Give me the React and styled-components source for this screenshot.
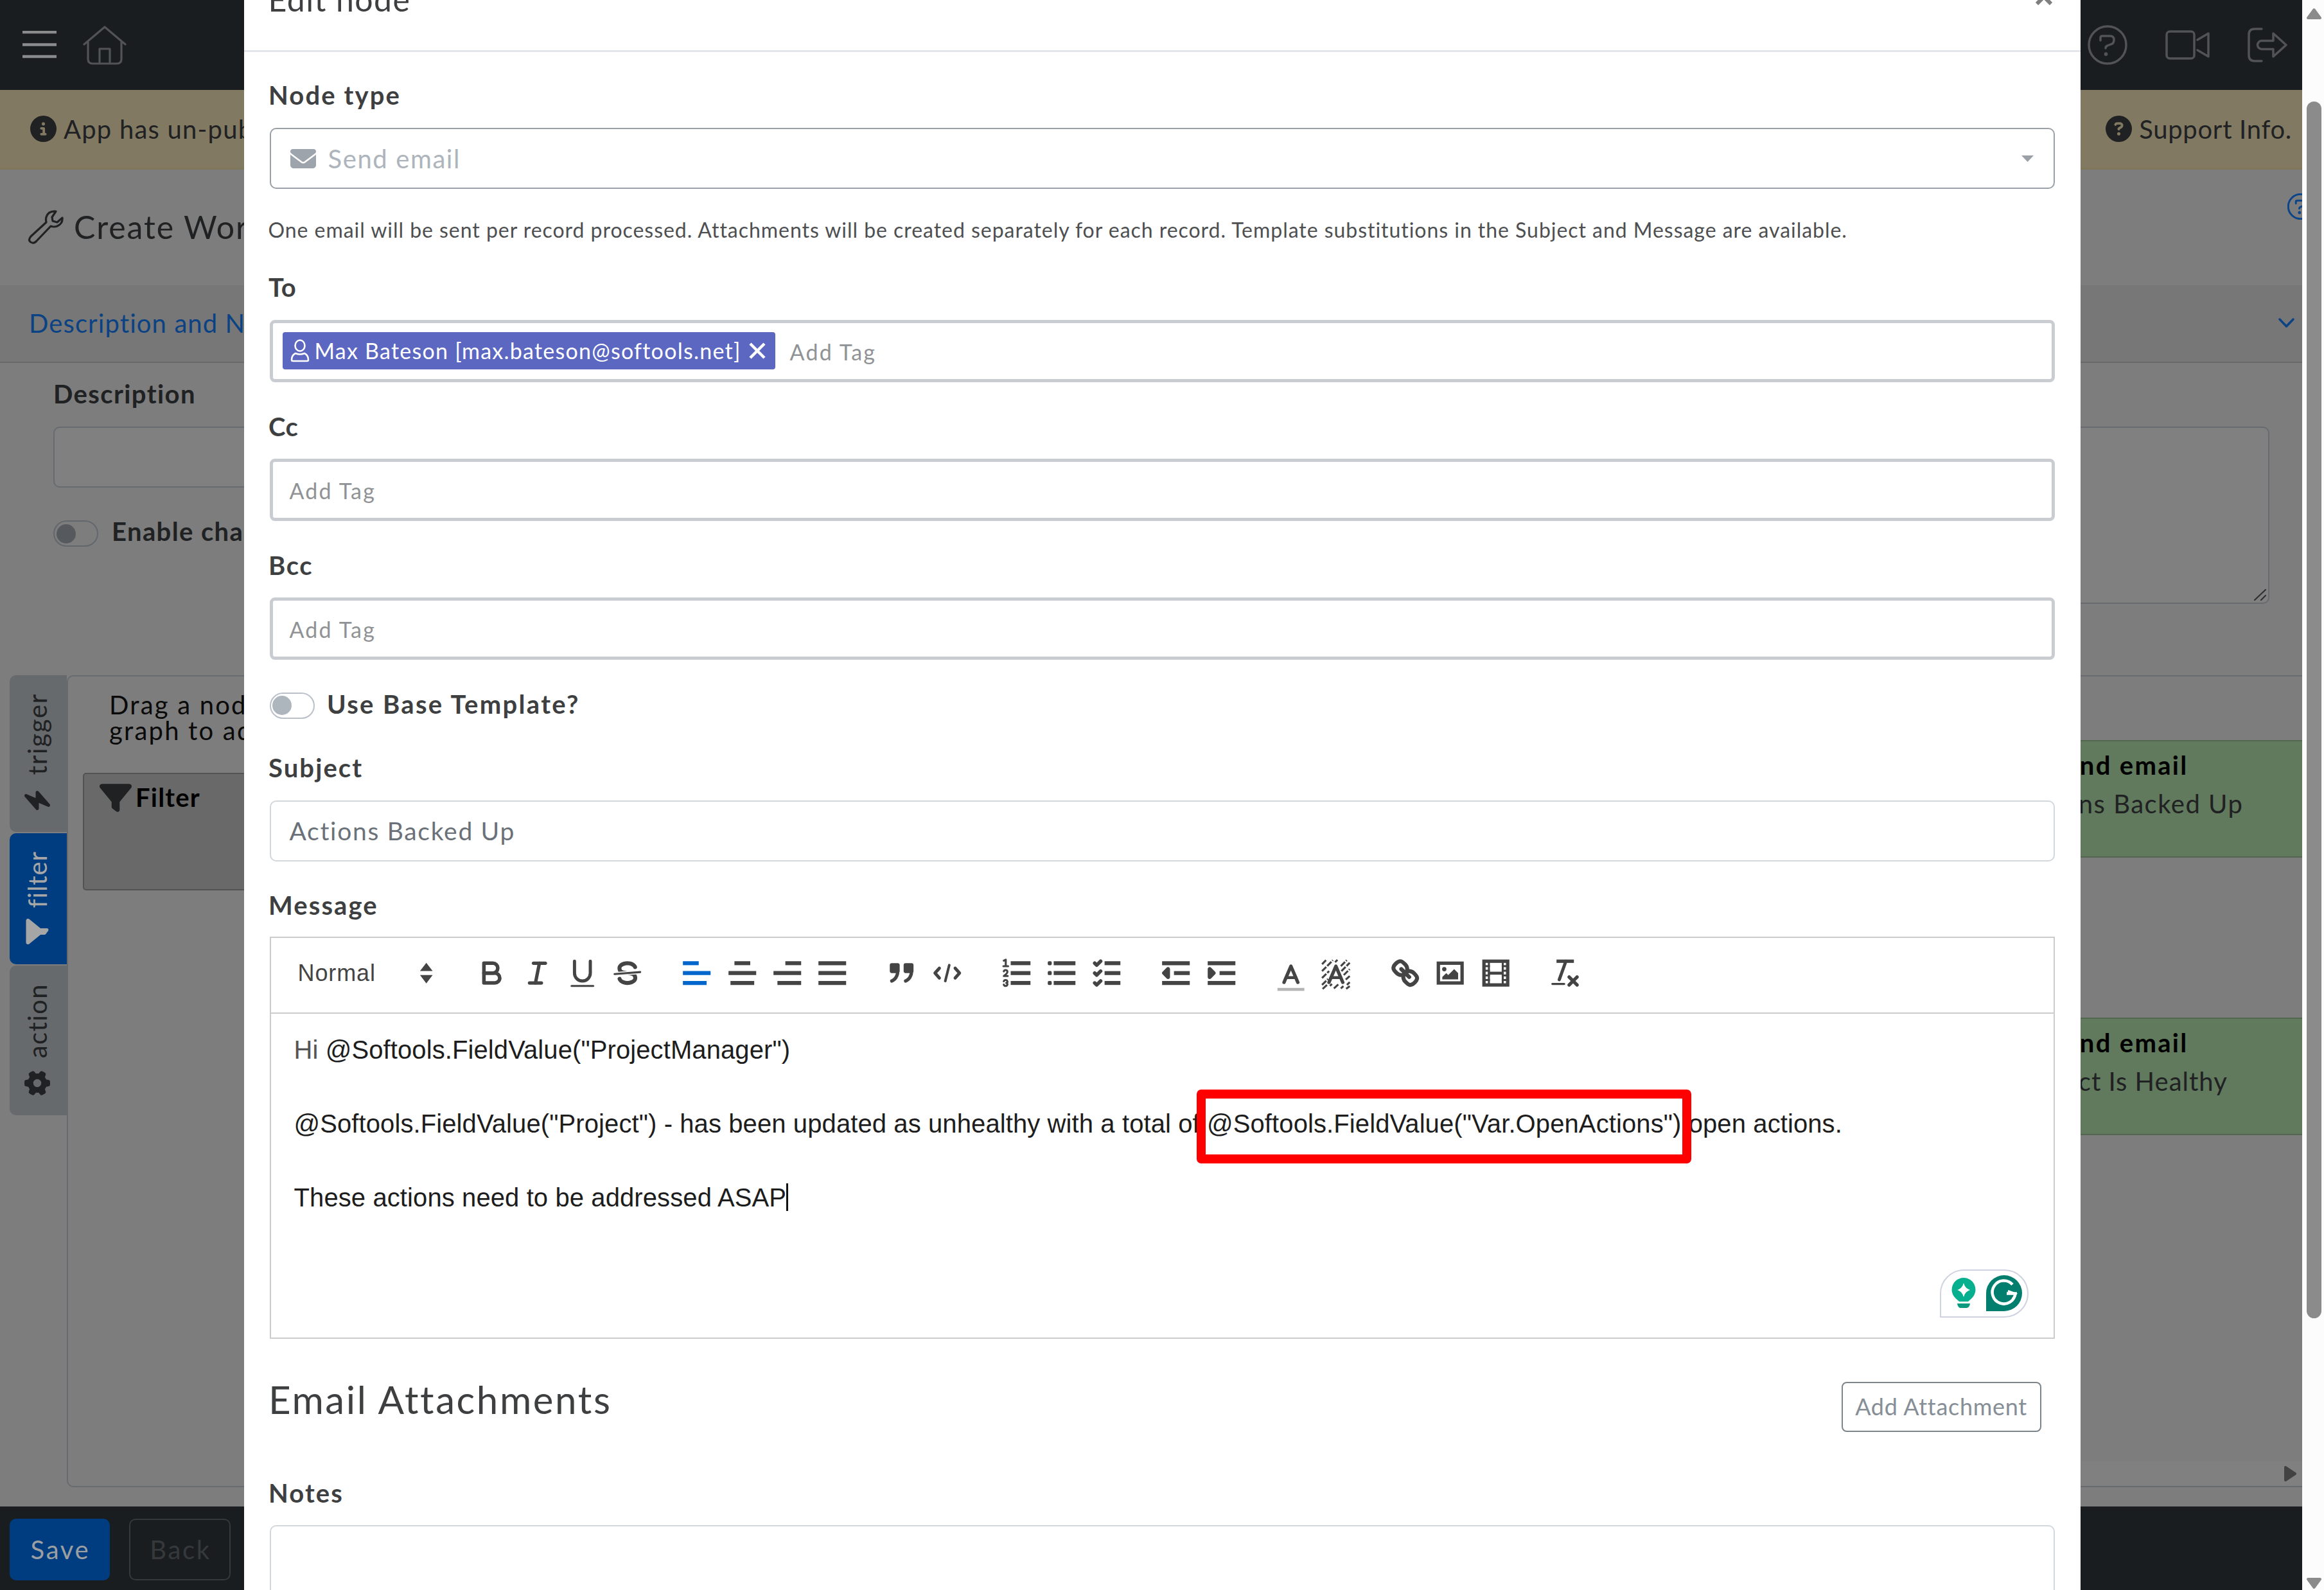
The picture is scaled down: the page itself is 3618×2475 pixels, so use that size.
import React from 'react';
import styled, { createGlobalStyle } from 'styled-components';
import { FaBolt, FaFilter, FaGear, FaCircleInfo, FaCircleQuestion, FaEnvelope } from 'react-icons/fa6';

const GlobalStyle = createGlobalStyle`
  *, *::before, *::after { box-sizing: border-box; }
  body { margin: 0; background: #7d7d7d; }
`;

/* ---------- page shell ---------- */

const Shell = styled.div`
  position: relative;
  display: flex;
  width: 3618px;
  height: 2475px;
  overflow: hidden;
  font-family: Lato, 'Open Sans', sans-serif;
  font-size: 40px;
  line-height: 60px;
  letter-spacing: 1.9px;
  color: #202122;
  white-space: nowrap;
`;

const Page = styled.div`
  display: flex;
  flex-direction: column;
  width: 3584px;
  overflow: hidden;
  background: #7d7d7d;
`;

const TopBar = styled.header`
  display: flex;
  align-items: center;
  justify-content: space-between;
  height: 140px;
  padding: 0 23px 0 35px;
  background: #1a1d20;
  color: #515355;
`;

const IconRow = styled.div`
  display: flex;
  align-items: center;
  gap: ${(p) => p.$gap}px;
`;

const Banner = styled.div`
  display: flex;
  align-items: center;
  justify-content: space-between;
  height: 124px;
  padding: 0 16px 0 47px;
  background: #827963;
  border-bottom: 3px solid #80765a;
`;

const BannerItem = styled.div`
  display: flex;
  align-items: center;
  gap: 11px;
  letter-spacing: ${(p) => p.$ls}px;
  svg { font-size: 41px; }
`;

const TitleBar = styled.div`
  display: flex;
  justify-content: space-between;
  height: 180px;
  padding-left: 42px;
`;

const PageTitle = styled.h1`
  display: flex;
  align-items: center;
  gap: 15px;
  margin: 0;
  height: 178px;
  font-size: 50px;
  font-weight: 400;
`;

const HelpCorner = styled.div`
  width: 23px;
  padding-top: 37px;
  overflow: hidden;
  color: #0b4488;
  svg { display: block; }
`;

const AccordionHeader = styled.div`
  display: flex;
  align-items: center;
  justify-content: space-between;
  height: 121px;
  padding: 0 12px 1px 45px;
  background: #777777;
  border-bottom: 2.5px solid #696969;
  color: #0b4284;
  letter-spacing: 1.1px;
`;

const FormArea = styled.section`
  display: flex;
  justify-content: space-between;
  height: 486px;
  padding: 18px 51px 0 83px;
`;

const FormColumn = styled.div`
  display: flex;
  flex-direction: column;
  width: 1650px;
`;

const DimLabel = styled.span`
  font-weight: 700;
  letter-spacing: 1.4px;
`;

const DimInput = styled.div`
  height: 95px;
  margin-top: 21px;
  border: 2.5px solid #676b6f;
  border-radius: 10px;
  background: #808080;
`;

const DimTextarea = styled.div`
  display: flex;
  align-items: flex-end;
  justify-content: flex-end;
  width: 1720px;
  height: 276px;
  margin-top: 81px;
  padding: 3px;
  border: 2.5px solid #676b6f;
  border-radius: 10px;
  background: #808080;
  color: #303030;
`;

const ToggleRow = styled.div`
  display: flex;
  align-items: center;
  height: 60px;
  margin-top: ${(p) => p.$mt}px;
  gap: 21px;
`;

const Switch = styled.span`
  display: flex;
  align-items: center;
  width: 70px;
  height: 41px;
  margin-top: 7px;
  padding-left: 2.5px;
  border: 2.5px solid ${(p) => p.$line};
  border-radius: 21px;
  &::before {
    content: '';
    width: 30px;
    height: 30px;
    border-radius: 50%;
    background: ${(p) => p.$knob};
  }
`;

const Workspace = styled.section`
  display: flex;
  height: 1264px;
  padding-left: 15px;
`;

const Tabs = styled.nav`
  display: flex;
  flex-direction: column;
  gap: 2px;
  width: 89px;
`;

const Tab = styled.div`
  display: flex;
  flex-direction: column;
  align-items: center;
  justify-content: space-between;
  height: ${(p) => p.$h}px;
  padding: 28px 4px ${(p) => p.$pb}px 0;
  border-radius: 10px 0 0 10px;
  background: ${(p) => (p.$active ? '#003d80' : '#666a6d')};
  color: ${(p) => (p.$active ? '#a6a6a6' : '#202122')};
  svg { transform: rotate(-90deg); font-size: 40px; }
`;

const TabText = styled.span`
  writing-mode: vertical-rl;
  transform: rotate(180deg);
  letter-spacing: ${(p) => p.$ls}px;
`;

const WorkPanel = styled.div`
  position: relative;
  flex: 1;
  display: flex;
  border: 2.5px solid #676a6e;
  border-right: 0;
  border-radius: 10px 0 0 10px;
`;

const Palette = styled.div`
  display: flex;
  flex-direction: column;
  width: 500px;
  padding: 24px 0 0 23px;
`;

const Hint = styled.p`
  margin: 0 0 0 41px;
  line-height: 40px;
  color: #0a0a0a;
  letter-spacing: 2.2px;
`;

const PaletteNode = styled.div`
  display: flex;
  align-items: flex-start;
  gap: 6px;
  width: 450px;
  height: 183px;
  margin-top: 46px;
  padding: 6px 24px;
  border: 2.5px solid #535353;
  border-radius: 5px;
  background: #696969;
  color: #000;
  font-weight: 700;
  letter-spacing: 1.2px;
  svg { font-size: 50px; margin-top: 6px; color: #202122; }
`;

const GraphNode = styled.div`
  position: absolute;
  top: ${(p) => p.$top}px;
  left: 3024px;
  display: flex;
  flex-direction: column;
  width: 600px;
  height: 183px;
  padding: 7px 10px;
  border: 2.5px solid #536650;
  background: #61795d;
`;

const NodeTitle = styled.div`
  display: flex;
  align-items: center;
  padding-left: 48px;
  color: #000;
  font-weight: 700;
  letter-spacing: 2.3px;
`;

const NodeText = styled.div`
  margin-left: ${(p) => p.$ml}px;
  letter-spacing: ${(p) => p.$ls}px;
`;

const CanvasScroll = styled.div`
  position: absolute;
  left: 500px;
  right: 0;
  bottom: 0;
  display: flex;
  align-items: center;
  justify-content: flex-end;
  height: 38px;
  padding-right: 9px;
  background: #808080;
  color: #424242;
`;

const Footer = styled.footer`
  display: flex;
  gap: 30px;
  height: 130px;
  margin-top: auto;
  padding: 19px 15px;
  background: #1a1d20;
`;

const FooterButton = styled.button`
  width: ${(p) => p.$w}px;
  height: 96px;
  padding: 0;
  border: 2.5px solid ${(p) => (p.$primary ? '#003d80' : '#36393c')};
  border-radius: 10px;
  background: ${(p) => (p.$primary ? '#003d80' : 'transparent')};
  color: ${(p) => (p.$primary ? '#9c9fa2' : '#36393c')};
  font: inherit;
  letter-spacing: 2.7px;
  text-indent: 2px;
`;

/* ---------- window scrollbar ---------- */

const Scrollbar = styled.div`
  display: flex;
  flex-direction: column;
  align-items: center;
  width: 34px;
  padding: 12px 4px 1px 7px;
  background: #fcfcfc;
  color: #8b8b8b;
`;

const ScrollThumb = styled.div`
  width: 23px;
  height: 1894px;
  margin: 128px 0 auto;
  border-radius: 12px;
  background: #8b8b8b;
`;

/* ---------- dialog ---------- */

const Dialog = styled.div`
  position: absolute;
  top: 0;
  left: 379.5px;
  width: 2859px;
  height: 2475px;
  overflow: hidden;
  background: #fff;
  color: #3e3f40;
`;

const DialogHeader = styled.div`
  display: flex;
  justify-content: space-between;
  height: 81px;
  padding: 0 44px 0 38px;
  border-bottom: 3px solid #e2e5ec;
  svg { margin-top: -18px; }
`;

const DialogTitle = styled.h5`
  margin: -31px 0 0;
  font-size: 50px;
  font-weight: 400;
  letter-spacing: 1.4px;
`;

const DialogBody = styled.div`
  display: flex;
  flex-direction: column;
  padding: 0 40px;
`;

const Field = styled.div`
  display: flex;
  flex-direction: column;
  gap: ${(p) => p.$gap || 21.5}px;
  margin-top: ${(p) => p.$mt}px;
`;

const Label = styled.label`
  height: 60px;
  margin-left: -1.5px;
  line-height: 63px;
  font-weight: 700;
  letter-spacing: ${(p) => p.$ls || 2.1}px;
`;

const Select = styled.div`
  display: flex;
  align-items: center;
  height: 95px;
  margin-top: 1px;
  padding: 0 31px 0 30px;
  border: 2.5px solid #9aa0a8;
  border-radius: 10px;
  color: #adb4bb;
  svg:first-child { font-size: 40px; color: #9ea4ab; margin-right: 19px; }
`;

const SelectValue = styled.span`
  flex: 1;
  letter-spacing: 1.6px;
`;

const HelpText = styled.p`
  height: 48px;
  margin: 38px 0 0 -2px;
  font-size: 32px;
  line-height: 52px;
  letter-spacing: 0.96px;
  color: #4d4f51;
`;

const TagInput = styled.div`
  display: flex;
  align-items: center;
  height: 97px;
  padding: 0 0 0 ${(p) => (p.$filled ? 15 : 26)}px;
  border: 5px solid #c9ccd0;
  border-radius: 8px;
  font-size: 34px;
`;

const Placeholder = styled.span`
  padding-top: 3px;
  color: #909395;
  letter-spacing: 2.2px;
`;

const Tag = styled.span`
  display: flex;
  align-items: center;
  height: 58px;
  margin-right: 23px;
  padding: 0 15px 0 12px;
  border-radius: 4px;
  background: #5b67c1;
  color: #fff;
  letter-spacing: 1.25px;
`;

const TagText = styled.span`
  margin: 0 12px 0 8px;
`;

const TextInput = styled.div`
  display: flex;
  align-items: center;
  height: ${(p) => p.$h}px;
  padding: 0 0 0 29px;
  border: 2.5px solid #d2d7dc;
  border-radius: 10px;
  color: #6a7178;
  font-size: 39px;
  letter-spacing: 1.7px;
`;

/* ---------- rich text editor ---------- */

const Editor = styled.div`
  position: relative;
  display: flex;
  flex-direction: column;
  height: 625.5px;
  border: 2.5px solid #ccc;
  font-family: 'Liberation Sans', Arial, sans-serif;
`;

const Toolbar = styled.div`
  display: flex;
  align-items: center;
  gap: 37.7px;
  height: 118px;
  padding: 0 0 6px 42px;
  border-bottom: 2.5px solid #ccc;
  color: #444;
`;

const ToolGroup = styled.div`
  display: flex;
`;

const ToolButton = styled.span`
  display: flex;
  justify-content: center;
  width: 70.35px;
  color: ${(p) => (p.$active ? '#06c' : '#444')};
`;

const FormatPicker = styled.div`
  display: flex;
  align-items: center;
  width: 229.5px;
  font-size: 36px;
  letter-spacing: 0.9px;
  svg { margin-left: 51px; }
`;

const MessageBody = styled.div`
  padding: 28px 0 0 36px;
  color: #1d1d1d;
  letter-spacing: 0.1px;
`;

const Line = styled.p`
  height: 57.4px;
  margin: 0;
  line-height: 57.4px;
`;

const Muted = styled.span`
  color: #555;
`;

const Highlight = styled.span`
  position: relative;
  &::after {
    content: '';
    position: absolute;
    top: -31px;
    left: -16px;
    width: 770px;
    height: 115px;
    border: 14px solid #fe0000;
    border-radius: 7px;
  }
`;

const Caret = styled.span`
  display: inline-block;
  width: 2.5px;
  height: 43px;
  background: #111;
  vertical-align: -7px;
`;

const Assistant = styled.div`
  position: absolute;
  right: 38.5px;
  bottom: 31px;
  display: flex;
  align-items: center;
  gap: 16px;
  width: 138px;
  height: 75px;
  padding-left: 16px;
  border: 2.5px solid #cfd2e0;
  border-radius: 38px 38px 38px 0;
  background: #fff;
`;

const AttachmentRow = styled.div`
  display: flex;
  align-items: flex-start;
  justify-content: space-between;
  height: 88px;
  margin-top: 58.5px;
  padding-right: 21px;
`;

const SectionTitle = styled.h2`
  margin: 0 0 0 -1.5px;
  font-size: 60px;
  line-height: 73px;
  font-weight: 400;
  letter-spacing: 2.6px;
`;

const OutlineButton = styled.button`
  width: 311px;
  height: 78px;
  margin-top: 9px;
  padding: 0 0 2px;
  border: 2.5px solid #7c848c;
  border-radius: 8px;
  background: #fff;
  color: #868e96;
  font: inherit;
  font-size: 36px;
  letter-spacing: 0.7px;
`;

/* ---------- icons ---------- */

const Outline = ({ w, h, box, sw, children }) => (
  <svg width={w} height={h} viewBox={box} fill="none" stroke="currentColor" strokeWidth={sw} strokeLinecap="round" strokeLinejoin="round">
    {children}
  </svg>
);

const HelpCircle = ({ size, sw }) => (
  <Outline w={size} h={size} box="0 0 62 62" sw={sw}>
    <circle cx="31" cy="31" r="29" />
    <path d="M20 24v-4q0-3 3-3h12q6 0 6 6t-5 7l-5 2q-3 1-3 4" />
    <path d="M28.500 45v.5" strokeWidth={sw * 1.6} />
  </Outline>
);

const Quill = ({ children }) => (
  <svg width="55.400" height="55.400" viewBox="0 0 18 18" fill="none" stroke="currentColor" strokeWidth="2" strokeLinecap="round" strokeLinejoin="round">
    {children}
  </svg>
);

const Fill = styled.g`
  fill: currentColor;
  stroke: none;
`;

const Bars = ({ rows }) => rows.map(([a, b, y]) => <line key={y} x1={a} x2={b} y1={y} y2={y} strokeLinecap="butt" />);

const icons = {
  bold: (
    <>
      <path d="M5,4H9.500A2.500,2.500,0,0,1,12,6.500v0A2.500,2.500,0,0,1,9.500,9H5Z" strokeWidth="1.800" />
      <path d="M5,9h5.500A2.500,2.500,0,0,1,13,11.500v0A2.500,2.500,0,0,1,10.500,14H5Z" strokeWidth="1.800" />
    </>
  ),
  italic: (
    <g strokeWidth="1.700">
      <line x1="7" x2="13" y1="4" y2="4" />
      <line x1="5" x2="11" y1="14" y2="14" />
      <line x1="8" x2="10" y1="14" y2="4" />
    </g>
  ),
  underline: (
    <>
      <path d="M5,3V9a4.012,4.012,0,0,0,4,4H9a4.012,4.012,0,0,0,4-4V3" strokeWidth="1.600" />
      <rect x="3" y="15" width="12" height="1" rx=".5" fill="currentColor" stroke="none" />
    </>
  ),
  strike: (
    <>
      <line x1="15.500" x2="2.500" y1="8.500" y2="9.500" strokeWidth="1" />
      <Fill>
        <path d="M9.007,8C6.542,7.791,6,7.519,6,6.500,6,5.792,7.283,5,9,5c1.571,0,2.765.679,2.969,1.309a1,1,0,0,0,1.900-.617C13.356,4.106,11.354,3,9,3,6.200,3,4,4.538,4,6.500a3.200,3.200,0,0,0,.5,1.843Z" />
        <path d="M8.984,10C11.457,10.208,12,10.479,12,11.500c0,.708-1.283,1.500-3,1.500-1.571,0-2.765-.679-2.969-1.309a1,1,0,1,0-1.900.617C4.644,13.894,6.646,15,9,15c2.800,0,5-1.538,5-3.500a3.200,3.200,0,0,0-.5-1.843Z" />
      </Fill>
    </>
  ),
  left: <Bars rows={[[2, 10, 4], [2, 16, 9], [2, 14, 14]]} />,
  center: <Bars rows={[[5, 13, 4], [2, 16, 9], [3, 15, 14]]} />,
  right: <Bars rows={[[8, 16, 4], [2, 16, 9], [4, 16, 14]]} />,
  justify: <Bars rows={[[2, 16, 4], [2, 16, 9], [2, 16, 14]]} />,
  quote: (
    <g fill="currentColor">
      <rect x="4" y="5" width="3" height="3" />
      <rect x="11" y="5" width="3" height="3" />
      <path d="M7,8c0,4.031-3,5-3,5" strokeWidth="1.700" fill="none" />
      <path d="M14,8c0,4.031-3,5-3,5" strokeWidth="1.700" fill="none" />
    </g>
  ),
  code: (
    <g strokeWidth="1.600">
      <polyline points="5 6.500 2.800 9 5 11.500" />
      <polyline points="13 6.500 15.200 9 13 11.500" />
      <line x1="10" x2="8" y1="5" y2="13" strokeWidth="1.300" />
    </g>
  ),
  ordered: (
    <>
      <Bars rows={[[6, 16, 4], [6, 16, 9], [6, 16, 14]]} />
      <g strokeWidth="1">
        <path d="M2.500 2.700l1-.5V5.500M2.300 5.500h2.400" />
        <path d="M4.500,10.500h-2c0-.234,1.850-1.076,1.850-2.234A0.959,0.959,0,0,0,2.500,8.156" />
        <path d="M2.500,14.846a0.959,0.959,0,0,0,1.850-.109A0.700,0.700,0,0,0,3.750,14a0.688,0.688,0,0,0,.6-0.736,0.959,0.959,0,0,0-1.850-.109" />
      </g>
    </>
  ),
  bullet: (
    <>
      <Bars rows={[[5, 16, 4], [5, 16, 9], [5, 16, 14]]} />
      <Fill>
        <rect x="2" y="3" width="2" height="2" rx=".6" />
        <rect x="2" y="8" width="2" height="2" rx=".6" />
        <rect x="2" y="13" width="2" height="2" rx=".6" />
      </Fill>
    </>
  ),
  check: (
    <>
      <Bars rows={[[8, 16, 4], [8, 16, 9], [8, 16, 14]]} />
      <g strokeWidth="1.800">
        <polyline points="3 4 4 5 6 3" />
        <polyline points="3 9 4 10 6 8" />
        <polyline points="3 14 4 15 6 13" />
      </g>
    </>
  ),
  outdent: (
    <>
      <Bars rows={[[2, 16, 4], [8, 16, 9], [2, 16, 14]]} />
      <polygon points="5 7 5 11 3 9" fill="currentColor" />
    </>
  ),
  indent: (
    <>
      <Bars rows={[[2, 16, 4], [8, 16, 9], [2, 16, 14]]} />
      <polygon points="3 7 3 11 5 9" fill="currentColor" />
    </>
  ),
  color: (
    <g>
      <polyline points="5.500 13.700 9 5.500 12.500 13.700" strokeWidth="1.700" />
      <line x1="6.500" x2="11.500" y1="11.300" y2="11.300" strokeWidth="1.500" />
      <rect x="2.200" y="16.500" width="13.600" height="1.500" fill="#b4b4b4" stroke="none" />
    </g>
  ),
  background: (
    <g>
      <path
        d="M2 4.500L4 2.500M2 8L7.500 2.500M2 11.500L5.600 8M2 15L5 12M2.300 17L4.500 15M8.600 3.500L9.800 2.300M11.500 5.500L14.500 2.500M11.800 8L16 3.800M13 10L16 7M14 12.300L16 10.500M14.600 15L16 13.600M14.200 17L16 15.600M6 15.500L7 14.500M8 16.800L10.500 14.500M11.500 16.800L12.800 15.600"
        strokeWidth="1"
        strokeDasharray="3 .7"
        strokeLinecap="butt"
      />
      <polyline points="5.500 13.700 9 5.500 12.500 13.700" strokeWidth="1.700" />
      <line x1="6.500" x2="11.500" y1="11.300" y2="11.300" strokeWidth="1.500" />
    </g>
  ),
  link: (
    <>
      <line x1="7" x2="11" y1="7" y2="11" />
      <path d="M8.900,4.577a3.476,3.476,0,0,1,.36,4.679A3.476,3.476,0,0,1,4.577,8.900C3.185,7.500,2.035,6.400,4.217,4.217S7.500,3.185,8.900,4.577Z" />
      <path d="M13.423,9.100a3.476,3.476,0,0,0-4.679-.36,3.476,3.476,0,0,0,.36,4.679c1.392,1.392,2.500,2.542,4.679.36S14.815,10.500,13.423,9.100Z" />
    </>
  ),
  image: (
    <>
      <rect x="3" y="4" width="12" height="10" strokeWidth="1.700" strokeLinejoin="miter" />
      <Fill>
        <circle cx="6" cy="7" r="1.100" />
        <polygon points="5 12.200 5 11 7 9 8 10 11 7 13 9 13 12.200" />
      </Fill>
    </>
  ),
  video: (
    <>
      <rect x="3" y="3" width="12" height="12" strokeWidth="1.700" strokeLinejoin="miter" />
      <Fill>
        <rect x="5" y="3" width="1" height="12" />
        <rect x="12" y="3" width="1" height="12" />
        <rect x="5" y="8.300" width="8" height="1.500" />
        {[5, 7.3, 9.7, 12].map((y) => (
          <React.Fragment key={y}>
            <rect x="3" y={y} width="3" height="1" />
            <rect x="12" y={y} width="3" height="1" />
          </React.Fragment>
        ))}
      </Fill>
    </>
  ),
  clean: (
    <>
      <line x1="4.600" x2="13.400" y1="3" y2="3" strokeWidth="1.700" strokeLinecap="butt" />
      <line x1="6" x2="9.350" y1="12.300" y2="3" strokeWidth="1.600" />
      <line x1="11" x2="15" y1="11" y2="15" strokeWidth="1.700" />
      <line x1="15" x2="11" y1="11" y2="15" strokeWidth="1.700" />
      <rect x="2" y="14" width="7" height="1" rx=".5" fill="currentColor" stroke="none" />
    </>
  ),
};

const toolGroups = [
  ['bold', 'italic', 'underline', 'strike'],
  ['left', 'center', 'right', 'justify'],
  ['quote', 'code'],
  ['ordered', 'bullet', 'check'],
  ['outdent', 'indent'],
  ['color', 'background'],
  ['link', 'image', 'video'],
  ['clean'],
];

const tabs = [
  { name: 'trigger', Icon: FaBolt, h: 244, pb: 29, ls: 1.7 },
  { name: 'filter', Icon: FaFilter, h: 204, pb: 31, ls: 0.9, active: true },
  { name: 'action', Icon: FaGear, h: 233, pb: 30, ls: 1.4 },
];

export default function App() {
  return (
    <Shell>
      <GlobalStyle />
      <Page>
        <TopBar>
          <IconRow $gap={41}>
            <svg width="53" height="44" viewBox="0 0 53 44" stroke="#8a8b8c" strokeWidth="4.500">
              <path d="M0 2h53M0 21.500h53M0 40h53" />
            </svg>
            <Outline w={68} h={62} box="0 0 68 62" sw={3.2}>
              <path d="M2 30L34 3l32 27M8 26v27q0 7 7 7h38q7 0 7-7V26M26 60V37h16v23" />
            </Outline>
          </IconRow>
          <IconRow $gap={59}>
            <HelpCircle size={62} sw={3.5} />
            <Outline w={69} h={48} box="0 0 69 48" sw={3.5}>
              <rect x="2" y="3" width="43" height="42" rx="5" />
              <path d="M50 16L67 6v36L50 32" />
            </Outline>
            <Outline w={62} h={54} box="0 0 62 54" sw={3.5}>
              <path d="M22 2h-11q-9 0-9 9v32q0 9 9 9h11" />
              <path d="M22 20.500h18V9l20 18-20 18V33.500H22a6.500 6.500 0 0 1 0-13z" />
            </Outline>
          </IconRow>
        </TopBar>
        <Banner>
          <BannerItem $ls={1.2}>
            <FaCircleInfo />
            App has un-published
          </BannerItem>
          <BannerItem $ls={0.7}>
            <FaCircleQuestion />
            Support Info.
          </BannerItem>
        </Banner>
        <TitleBar>
          <PageTitle>
            <Outline w={58} h={54} box="0 0 58 54" sw={3.2}>
              <path d="M45 3Q33 2 30 12q-1 4 0 8L6 42q-5 6 0 9 5 3 9-2l22-23q5 2 10 0 9-4 8-13l-8 7-7-2-1-6z" />
            </Outline>
            Create Workflow
          </PageTitle>
          <HelpCorner>
            <HelpCircle size={41} sw={4.5} />
          </HelpCorner>
        </TitleBar>
        <AccordionHeader>
          Description and Notes
          <Outline w={25} h={16} box="0 0 25 16" sw={3.5}>
            <path d="M2 2l10.500 11L23 2" />
          </Outline>
        </AccordionHeader>
        <FormArea>
          <FormColumn>
            <DimLabel>Description</DimLabel>
            <DimInput />
            <ToggleRow $mt={38}>
              <Switch $line="#62676d" $knob="#565a5f" />
              <DimLabel>Enable changes</DimLabel>
            </ToggleRow>
          </FormColumn>
          <DimTextarea>
            <Outline w={19} h={18} box="0 0 19 18" sw={2.2}>
              <path d="M1 17L18 1M11 17l7-7" />
            </Outline>
          </DimTextarea>
        </FormArea>
        <Workspace>
          <Tabs>
            {tabs.map(({ name, Icon, h, pb, ls, active }) => (
              <Tab key={name} $h={h} $pb={pb} $active={active}>
                <TabText $ls={ls}>{name}</TabText>
                <Icon />
              </Tab>
            ))}
          </Tabs>
          <WorkPanel>
            <Palette>
              <Hint>
                Drag a node
                <br />
                graph to add
              </Hint>
              <PaletteNode>
                <FaFilter />
                Filter
              </PaletteNode>
            </Palette>
            <GraphNode $top={99}>
              <NodeTitle>Send email</NodeTitle>
              <NodeText $ls={1.5} $ml={-6}>Actions Backed Up</NodeText>
            </GraphNode>
            <GraphNode $top={531}>
              <NodeTitle>Send email</NodeTitle>
              <NodeText $ls={1} $ml={-2}>Project Is Healthy</NodeText>
            </GraphNode>
            <CanvasScroll>
              <svg width="19" height="24" viewBox="0 0 19 24" fill="currentColor" stroke="currentColor" strokeWidth="4" strokeLinejoin="round">
                <path d="M2 2v20l15-10z" />
              </svg>
            </CanvasScroll>
          </WorkPanel>
        </Workspace>
        <Footer>
          <FooterButton $w={156} $primary>Save</FooterButton>
          <FooterButton $w={158}>Back</FooterButton>
        </Footer>
      </Page>

      <Scrollbar>
        <svg width="23" height="18" viewBox="0 0 23 18" fill="currentColor" stroke="currentColor" strokeWidth="4" strokeLinejoin="round">
          <path d="M11.500 3L21 16H2z" />
        </svg>
        <ScrollThumb />
        <svg width="23" height="18" viewBox="0 0 23 18" fill="currentColor" stroke="currentColor" strokeWidth="4" strokeLinejoin="round">
          <path d="M11.500 15L21 2H2z" />
        </svg>
      </Scrollbar>

      <Dialog>
        <DialogHeader>
          <DialogTitle>Edit node</DialogTitle>
          <svg width="26" height="26" viewBox="0 0 26 26" stroke="#7f7f7f" strokeWidth="6">
            <path d="M2 2l22 22M24 2L2 24" />
          </svg>
        </DialogHeader>
        <DialogBody>
          <Field $mt={35.5}>
            <Label>Node type</Label>
            <Select>
              <FaEnvelope />
              <SelectValue>Send email</SelectValue>
              <svg width="19" height="10" viewBox="0 0 19 10" fill="#9aa0a6">
                <path d="M0 0h19L9.500 10z" />
              </svg>
            </Select>
          </Field>
          <HelpText>
            One email will be sent per record processed. Attachments will be created separately for each record. Template
            substitutions in the Subject and Message are available.
          </HelpText>
          <Field $mt={36}>
            <Label $ls={0.5}>To</Label>
            <TagInput $filled>
              <Tag>
                <Outline w={30} h={36} box="0 0 30 36" sw={2.6}>
                  <ellipse cx="15" cy="10" rx="7.500" ry="8.500" />
                  <path d="M8 22q-6 3-6 10 0 2 2 2h22q2 0 2-2 0-7-6-10-7 3-14 0z" />
                </Outline>
                <TagText>Max Bateson [max.bateson@softools.net]</TagText>
                <svg width="26" height="26" viewBox="0 0 26 26" stroke="#fff" strokeWidth="4.500">
                  <path d="M2 2l22 22M24 2L2 24" />
                </svg>
              </Tag>
              <Placeholder>Add Tag</Placeholder>
            </TagInput>
          </Field>
          <Field $mt={38}>
            <Label $ls={0.5}>Cc</Label>
            <TagInput>
              <Placeholder>Add Tag</Placeholder>
            </TagInput>
          </Field>
          <Field $mt={37.5}>
            <Label $ls={1.6}>Bcc</Label>
            <TagInput>
              <Placeholder>Add Tag</Placeholder>
            </TagInput>
          </Field>
          <ToggleRow $mt={37.5}>
            <Switch $line="#b9c0c8" $knob="#adb5bd" />
            <Label $ls={2.35}>Use Base Template?</Label>
          </ToggleRow>
          <Field $mt={39.5} $gap={22}>
            <Label>Subject</Label>
            <TextInput $h={94.5}>Actions Backed Up</TextInput>
          </Field>
          <Field $mt={37.5} $gap={20}>
            <Label>Message</Label>
            <Editor>
              <Toolbar>
                <FormatPicker>
                  Normal
                  <Quill>
                    <Fill>
                      <path d="M5.800 8h6.400L9 3.800zM5.800 10h6.400L9 14.200z" />
                    </Fill>
                  </Quill>
                </FormatPicker>
                {toolGroups.map((group) => (
                  <ToolGroup key={group[0]}>
                    {group.map((name) => (
                      <ToolButton key={name} $active={name === 'left'}>
                        <Quill>{icons[name]}</Quill>
                      </ToolButton>
                    ))}
                  </ToolGroup>
                ))}
              </Toolbar>
              <MessageBody>
                <Line>
                  <Muted>Hi</Muted> @Softools.FieldValue("ProjectManager")
                </Line>
                <Line />
                <Line>
                  @Softools.FieldValue("Project") - has been updated as unhealthy with a total of{' '}
                  <Highlight>@Softools.FieldValue("Var.OpenActions")</Highlight> open actions.
                </Line>
                <Line />
                <Line>
                  These actions need to be addressed ASAP
                  <Caret />
                </Line>
              </MessageBody>
              <Assistant>
                <svg width="38" height="48" viewBox="0 0 38 48">
                  <path d="M19 0a18.500 18.500 0 0 1 12 32.500Q28 35 26 37H12q-2-2-5-4.500A18.500 18.500 0 0 1 19 0z" fill="#06b08f" />
                  <path d="M19 8q2 8.500 10 11-8 2.500-10 11-2-8.500-10-11 8-2.500 10-11z" fill="#fff" />
                  <path d="M9 40h20q-1 7-6 7h-8q-5 0-6-7z" fill="#0a9a80" />
                </svg>
                <svg width="56" height="56" viewBox="0 0 56 56">
                  <path d="M28 0a28 28 0 0 1 0 56H0V28A28 28 0 0 1 28 0z" fill="#027e6f" />
                  <path d="M41 14.500A18 18 0 1 0 45.500 28.500H32" fill="none" stroke="#fff" strokeWidth="4.500" />
                  <path d="M34 24.500L46.500 29 41 37" fill="none" stroke="#fff" strokeWidth="3" />
                </svg>
              </Assistant>
            </Editor>
          </Field>
          <AttachmentRow>
            <SectionTitle>Email Attachments</SectionTitle>
            <OutlineButton>Add Attachment</OutlineButton>
          </AttachmentRow>
          <Field $mt={63} $gap={20.5}>
            <Label>Notes</Label>
            <TextInput $h={160} />
          </Field>
        </DialogBody>
      </Dialog>
    </Shell>
  );
}
